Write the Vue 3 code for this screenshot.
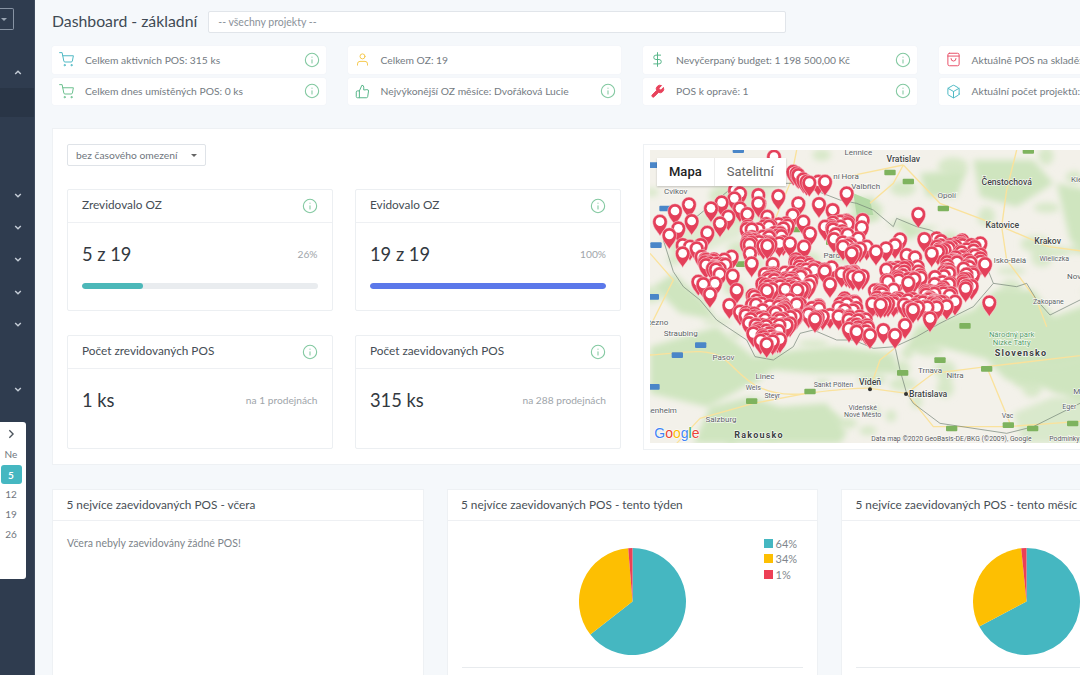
<script setup>
const icons = {
  cart: '<circle cx="9" cy="21" r="1"/><circle cx="20" cy="21" r="1"/><path d="M1 1h4l2.68 13.39a2 2 0 0 0 2 1.61h9.72a2 2 0 0 0 2-1.61L23 6H6"/>',
  user: '<path d="M20 21v-2a4 4 0 0 0-4-4H8a4 4 0 0 0-4 4v2"/><circle cx="12" cy="7" r="4"/>',
  thumb: '<path d="M14 9V5a3 3 0 0 0-3-3l-4 9v11h11.28a2 2 0 0 0 2-1.7l1.38-9a2 2 0 0 0-2-2.3zM7 22H4a2 2 0 0 1-2-2v-7a2 2 0 0 1 2-2h3"/>',
  dollar: '<path d="M12 1v22M17 5H9.5a3.5 3.5 0 0 0 0 7h5a3.5 3.5 0 0 1 0 7H6"/>',
  wrench: '<path fill="currentColor" d="M14.7 6.3a1 1 0 0 0 0 1.4l1.6 1.6a1 1 0 0 0 1.4 0l3.77-3.77a6 6 0 0 1-7.94 7.94l-6.91 6.91a2.12 2.12 0 0 1-3-3l6.91-6.91a6 6 0 0 1 7.94-7.94l-3.76 3.76z"/>',
  bag: '<rect x="3" y="2" width="18" height="20" rx="2.5"/><path d="M3 6.5h18M16 10.5a4 4 0 0 1-8 0"/>',
  box: '<path d="M21 16V8a2 2 0 0 0-1-1.73l-7-4a2 2 0 0 0-2 0l-7 4A2 2 0 0 0 3 8v8a2 2 0 0 0 1 1.73l7 4a2 2 0 0 0 2 0l7-4A2 2 0 0 0 21 16z"/><path d="M3.27 6.96 12 12.01l8.73-5.05M12 22.08V12"/>',
}

const kpis = [
  { icon: 'cart', color: '#4fb9c4', text: 'Celkem aktivních POS: 315 ks', info: true },
  { icon: 'user', color: '#f5c94f', text: 'Celkem OZ: 19', info: false },
  { icon: 'dollar', color: '#58b68a', text: 'Nevyčerpaný budget: 1 198 500,00 Kč', info: true },
  { icon: 'bag', color: '#e9536b', text: 'Aktuálně POS na skladě: 42 ks', info: true },
  { icon: 'cart', color: '#6cc08f', text: 'Celkem dnes umístěných POS: 0 ks', info: true },
  { icon: 'thumb', color: '#58b68a', text: 'Nejvýkonější OZ měsíce: Dvořáková Lucie', info: true },
  { icon: 'wrench', color: '#e8435c', text: 'POS k opravě: 1', info: true },
  { icon: 'box', color: '#4fb9c4', text: 'Aktuální počet projektů: 6', info: true },
]

const sideRows = [
  { cls: 'up' }, { cls: 'active' }, { cls: 'blank' },
  { cls: 'down' }, { cls: 'down' }, { cls: 'down' }, { cls: 'down' }, { cls: 'down' },
  { cls: 'gap' }, { cls: 'down' },
]

const progressCards = [
  { title: 'Zrevidovalo OZ', value: '5 z 19', pct: 26, color: '#4cb8b9' },
  { title: 'Evidovalo OZ', value: '19 z 19', pct: 100, color: '#5b78ea' },
]
const countCards = [
  { title: 'Počet zrevidovaných POS', value: '1 ks', note: 'na 1 prodejnách' },
  { title: 'Počet zaevidovaných POS', value: '315 ks', note: 'na 288 prodejnách' },
]

// pie slices as clockwise angles from the top
function slice(from, to, r = 53.5) {
  const pt = a => {
    const rad = (a - 90) * Math.PI / 180
    return `${(r + r * Math.cos(rad)).toFixed(2)} ${(r + r * Math.sin(rad)).toFixed(2)}`
  }
  return `M${r} ${r}L${pt(from)}A${r} ${r} 0 ${to - from > 180 ? 1 : 0} 1 ${pt(to)}Z`
}
const pieCards = [
  { title: '5 nejvíce zaevidovaných POS - tento týden', cuts: [232, 355.4] },
  { title: '5 nejvíce zaevidovaných POS - tento měsíc', cuts: [242, 354.3] },
]
const pieColors = ['#45b7c1', '#fdbf02', '#ed3f55']
const legend = ['64%', '34%', '1%']

// pin heads in map units (3 units = 1px)
const loose = `402,50 60,245 105,213 147,193 88,285 115,265 155,243 213,205 245,187 202,278 240,250 265,230
 283,175 300,160 355,165 300,205 322,222 358,190 415,168 382,230 460,95 475,105 490,118 508,128 535,125 555,125
 475,190 458,225 490,245 537,192 578,210 620,160 555,260 510,280 600,245 668,240 665,262 835,222 1048,487
 128,315 128,340 150,320 170,325 182,315 185,350 275,350 330,340 335,370 398,372 375,402 278,407 340,300
 492,320 468,358 708,335 738,325 765,315 780,298 800,345 825,352 680,320 655,295 853,297 890,295 875,340
 940,360 1035,372 765,585 730,570 690,585 650,575 380,612 340,580 268,495 300,515 335,520 210,462 225,430
 175,425 190,432 290,450 570,432 575,382 570,525 795,555 870,535 945,485 977,445 470,100 500,125 285,150 355,190`
const clusters = [
  [385, 285, 65, 35, 40], [600, 270, 25, 30, 16], [225, 380, 32, 25, 20], [440, 425, 75, 28, 46],
  [510, 385, 45, 20, 14], [380, 510, 75, 45, 42], [385, 580, 40, 28, 22], [500, 515, 50, 25, 18],
  [635, 410, 35, 18, 12], [620, 500, 30, 30, 14], [655, 550, 35, 25, 16], [735, 470, 40, 25, 22],
  [790, 405, 55, 25, 24], [830, 480, 65, 30, 26], [895, 470, 50, 30, 20], [930, 320, 40, 20, 16],
  [985, 340, 40, 30, 22], [960, 400, 40, 40, 18], [905, 410, 25, 25, 10], [635, 330, 30, 25, 10],
]

let seed = 17
const rnd = () => (seed = (seed * 16807) % 2147483647) / 2147483647
const pins = loose.trim().split(/\s+/).map(p => p.split(',').map(Number))
clusters.forEach(([cx, cy, rx, ry, n]) => {
  for (let i = 0; i < n; i++) {
    pins.push([Math.round(cx + (rnd() * 2 - 1) * rx), Math.round(cy + (rnd() * 2 - 1) * ry)])
  }
})
pins.sort((a, b) => a[1] - b[1])

// mottled woodland texture
const woods = Array.from({ length: 70 }, () => ({
  x: Math.round(30 + rnd() * 1350),
  y: Math.round(30 + rnd() * 880),
  rx: Math.round(14 + rnd() * 34),
  ry: Math.round(8 + rnd() * 22),
}))

const shields = [
  [750, 97, 'g'], [805, 124, 'g'], [910, 205, 'g'], [1165, 32, 'g'], [465, 268, 'g'], [575, 306, 'g'], [305, 372, 'g'],
  [975, 557, 'g'], [900, 660, 'g'], [788, 698, 'g'], [1040, 686, 'g'], [510, 754, 'g'], [335, 783, 'g'],
  [1105, 855, 'g'], [1178, 865, 'g'], [1298, 850, 'g'], [935, 865, 'g'],
  [295, 30, 'b'], [38, 75, 'b'], [75, 205, 'b'], [48, 315, 'b'], [40, 470, 'b'], [182, 615, 'b'], [112, 645, 'b'], [42, 740, 'b'],
]
const labels = [
  ['Lennice', 655, 45, 'sm'], ['Vratislav', 790, 66, 'big'], ['Cvikov', 107, 163, 'sm'], ['Valbřich', 677, 146, 'sm'],
  ['ní Hora', 618, 116, 'sm'], ['Opolí', 920, 173, 'sm'], ['Čenstochová', 1100, 135, 'big'], ['Katovice', 1087, 265, 'big'],
  ['Krakov', 1223, 311, 'big'], ['Wieliczka', 1243, 364, 'xs'], ['lsko-Bělá', 1110, 370, 'sm'], ['Pard', 575, 355, 'sm'],
  ['Nov', 1302, 416, 'sm'], ['Kie', 1310, 126, 'sm'], ['Zakopane', 1225, 491, 'xs'], ['Straubing', 122, 589, 'sm'],
  ['tezno', 55, 556, 'sm'], ['Pasov', 250, 660, 'sm'], ['Linec', 375, 716, 'sm'], ['Wels', 340, 750, 'xs'],
  ['Steyr', 397, 775, 'xs'], ['Sankt Pölten', 580, 741, 'xs'], ['Vídeň', 690, 736, 'big'], ['Trnava', 870, 700, 'sm'],
  ['Nitra', 945, 715, 'sm'], ['Vídeňské', 668, 810, 'xs'], ['Nové Město', 668, 830, 'xs'], ['senheim', 65, 820, 'sm'],
  ['Salzburg', 243, 846, 'sm'], ['Eger', 1288, 808, 'xs'], ['Vac', 1103, 835, 'xs'], ['M', 1310, 763, 'sm'],
]
</script>

<template>
  <div class="page">
    <aside class="sidebar">
      <div class="toggle"><span class="caret"></span></div>
      <div v-for="(row, i) in sideRows" :key="i" class="side-row" :class="row.cls">
        <svg v-if="row.cls === 'up' || row.cls === 'down'" viewBox="0 0 10 6" class="chev">
          <path :d="row.cls === 'up' ? 'M1.5 5 5 1.5 8.500 5' : 'M1.500 1 5 4.500 8.500 1'" />
        </svg>
      </div>
    </aside>

    <div class="calendar">
      <svg viewBox="0 0 8 12" class="cal-next"><path d="M2 1.500 6.500 6 2 10.500" /></svg>
      <span class="cal-cell cal-head">Ne</span>
      <span class="cal-cell cal-today">5</span>
      <span class="cal-cell">12</span>
      <span class="cal-cell">19</span>
      <span class="cal-cell">26</span>
    </div>

    <main class="main">
      <header class="head">
        <h1>Dashboard - základní</h1>
        <div class="project-select">-- všechny projekty --</div>
      </header>

      <section class="kpis">
        <div v-for="k in kpis" :key="k.text" class="kpi">
          <svg class="kpi-icon" viewBox="0 0 24 24" :style="{ color: k.color }" v-html="icons[k.icon]"></svg>
          <span class="kpi-text">{{ k.text }}</span>
          <svg v-if="k.info" class="info" viewBox="0 0 24 24">
            <circle cx="12" cy="12" r="10" /><path d="M12 16.500v-5M12 7.600v.2" />
          </svg>
        </div>
      </section>

      <section class="panel">
        <div class="panel-left">
          <div class="range-select">bez časového omezení <span class="range-caret"></span></div>
          <div class="stat-grid">
            <div v-for="c in progressCards" :key="c.title" class="stat stat-progress">
              <div class="stat-head">
                <span>{{ c.title }}</span>
                <svg class="info" viewBox="0 0 24 24">
                  <circle cx="12" cy="12" r="10" /><path d="M12 16.500v-5M12 7.600v.2" />
                </svg>
              </div>
              <div class="stat-body">
                <div class="stat-line">
                  <span class="stat-value">{{ c.value }}</span>
                  <span class="stat-note">{{ c.pct }}%</span>
                </div>
                <div class="bar">
                  <div class="bar-fill" :style="{ width: c.pct + '%', background: c.color }"></div>
                </div>
              </div>
            </div>
            <div v-for="c in countCards" :key="c.title" class="stat stat-count">
              <div class="stat-head">
                <span>{{ c.title }}</span>
                <svg class="info" viewBox="0 0 24 24">
                  <circle cx="12" cy="12" r="10" /><path d="M12 16.500v-5M12 7.600v.2" />
                </svg>
              </div>
              <div class="stat-body">
                <div class="stat-line">
                  <span class="stat-value">{{ c.value }}</span>
                  <span class="stat-note">{{ c.note }}</span>
                </div>
              </div>
            </div>
          </div>
        </div>

        <div class="map-wrap">
          <div class="map">
            <svg class="map-svg" viewBox="30 30 1350 880" preserveAspectRatio="xMinYMin slice">
              <defs>
                <filter id="soft"><feGaussianBlur stdDeviation="9" /></filter>
                <g id="pin">
                  <path d="M0 43C-6 30-22 19-22 0A22 22 0 1 1 22 0C22 19 6 30 0 43Z" fill="#e4405a" stroke="#fbdfe3" stroke-width="1.500" />
                  <circle r="13" fill="#fff" />
                </g>
              </defs>
              <rect x="30" y="30" width="1350" height="880" fill="#f3f1ea" />
              <g fill="#d7e8c8" filter="url(#soft)">
                <ellipse v-for="(w, i) in woods" :key="i" :cx="w.x" :cy="w.y" :rx="w.rx" :ry="w.ry" />
              </g>
              <g fill="#cfe5bf" filter="url(#soft)">
                <path d="M620 180 700 170 720 240 660 240Z" />
                <path d="M830 560 1000 510 1070 450 1180 450 1240 530 1380 480 1380 650 1250 680 1050 660 900 620 790 640Z" />
                <path d="M1040 660 1250 680 1380 650 1380 800 1200 740 1100 720Z" />
                <path d="M30 620 230 560 340 650 470 630 590 620 760 640 780 700 680 700 520 700 400 690 280 760 200 800 30 760Z" />
                <path d="M210 800 330 770 420 800 560 790 620 880 600 910 160 910Z" />
                <path d="M1000 60 1180 60 1240 130 1130 200 1020 170Z" />
                <path d="M1250 130 1380 160 1380 380 1290 300Z" />
                <path d="M100 400 190 480 230 540 120 520 40 440Z" />
                <path d="M770 230 830 260 900 260 800 300Z" />
                <path d="M840 100 980 90 950 170 860 170Z" />
                <path d="M60 300 300 140 420 130 300 290 130 360Z" opacity=".55" />
                <path d="M1120 820 1240 770 1380 780 1380 910 1150 910Z" opacity=".7" />
              </g>
              <path d="M640 160 690 180 700 225 650 225Z" fill="#b3d9a5" />
              <g fill="none" stroke="#fae29c" stroke-width="4">
                <path d="M30 645C120 640 200 620 250 655S340 780 500 760 690 745 690 745L800 760 880 700 1040 680 1380 640" />
                <path d="M690 745 720 660 770 620 790 500" />
                <path d="M790 75 760 130 690 190M790 75 900 190 1085 260 1225 320 1380 340" />
                <path d="M1085 260 1100 150 1130 30M1085 260 1100 360 1190 480 1220 560" />
                <path d="M180 835 340 790 500 760M180 835 110 910M30 340 100 420 30 560" />
                <path d="M800 760 880 860 1100 860 1380 840M1040 680 1110 850" />
                <path d="M470 30 450 130 380 300M620 110 790 75" />
              </g>
              <g fill="none" stroke="#6f7f73" stroke-width="2" stroke-linejoin="round">
                <path d="M100 395 130 440 180 480 230 540 320 600 345 650 400 660 460 620 480 580 520 570 590 600 640 600 700 625 765 620 830 590 900 550 1000 500 1060 430 1040 380 960 310 870 270 830 260 770 235 760 260 700 210 650 190 600 180 470 130 350 130 280 140 170 230 70 300Z" />
                <path d="M1060 430 1130 440 1160 430 1190 480 1230 525 1320 480 1380 480M765 620 780 690 800 760 820 790 900 850 1100 880 1180 860 1380 760" />
              </g>
              <g v-for="s in shields" :key="s[0] + '-' + s[1]">
                <rect :x="s[0] - 17" :y="s[1] - 8" width="34" height="17" rx="3" :fill="s[2] === 'g' ? '#7eb35e' : '#4a86c8'" />
              </g>
              <text v-for="l in labels" :key="l[0]" :x="l[1]" :y="l[2]" class="map-label" :class="l[3]" text-anchor="middle">{{ l[0] }}</text>
              <text x="1115" y="590" text-anchor="middle" class="map-label park">Národný park</text>
              <text x="1115" y="614" text-anchor="middle" class="map-label park">Nízke Tatry</text>
              <text x="1143" y="647" text-anchor="middle" class="map-label country">Slovensko</text>
              <text x="357" y="894" text-anchor="middle" class="map-label country">Rakousko</text>
              <circle cx="690" cy="748" r="6" fill="#333" />
              <circle cx="798" cy="762" r="6" fill="#333" />
              <text x="807" y="770" class="map-label big">Bratislava</text>
              <use v-for="(p, i) in pins" :key="i" href="#pin" :x="p[0]" :y="p[1]" />
              <text x="43" y="894" class="google">
                <tspan fill="#4285f4">G</tspan><tspan fill="#ea4335">o</tspan><tspan fill="#fbbc05">o</tspan><tspan fill="#4285f4">g</tspan><tspan fill="#34a853">l</tspan><tspan fill="#ea4335">e</tspan>
              </text>
              <text x="694" y="902" class="attrib">Data map ©2020 GeoBasis-DE/BKG (©2009), Google</text>
              <text x="1228" y="902" class="attrib">Podmínky použití</text>
            </svg>
            <div class="map-type">
              <span class="map-type-on">Mapa</span>
              <span class="map-type-off">Satelitní</span>
            </div>
          </div>
        </div>
      </section>

      <section class="charts">
        <div class="chart-card">
          <div class="chart-head">5 nejvíce zaevidovaných POS - včera</div>
          <div class="chart-body">
            <p class="empty">Včera nebyly zaevidovány žádné POS!</p>
          </div>
        </div>
        <div v-for="c in pieCards" :key="c.title" class="chart-card">
          <div class="chart-head">{{ c.title }}</div>
          <div class="chart-body chart-pie">
            <svg class="pie" viewBox="0 0 107 107">
              <path :d="slice(0, c.cuts[0])" :fill="pieColors[0]" />
              <path :d="slice(c.cuts[0], c.cuts[1])" :fill="pieColors[1]" />
              <path :d="slice(c.cuts[1], 360)" :fill="pieColors[2]" />
            </svg>
            <ul class="legend">
              <li v-for="(l, i) in legend" :key="l"><i :style="{ background: pieColors[i] }"></i>{{ l }}</li>
            </ul>
            <div class="chart-rule"></div>
          </div>
        </div>
      </section>
    </main>
  </div>
</template>

<style scoped>
.page {
  position: relative;
  display: flex;
  width: 1080px;
  height: 675px;
  overflow: hidden;
  background: #f5f8fb;
  font-family: Lato, "Noto Sans", sans-serif;
  color: #6d747b;
}
.sidebar {
  flex: none;
  width: 34px;
  padding-top: 8px;
  background: #2f3c4f;
  border-right: 1px solid #3f4c5e;
}
.toggle {
  display: flex;
  align-items: center;
  width: 14px;
  height: 22px;
  border: 1px solid #8793a3;
  border-left: 0;
  border-radius: 0 2px 2px 0;
  padding-left: 1px;
  box-sizing: border-box;
}
.caret {
  border: 3px solid transparent;
  border-top-color: #9aa5b3;
  border-bottom: 0;
}
.side-row {
  display: flex;
  align-items: center;
  justify-content: center;
  height: 32.400px;
  padding-left: 2px;
}
.side-row.up {
  margin-top: 26px;
}
.side-row.active {
  height: 29px;
  background: #293546;
}
.side-row.blank {
  height: 61.500px;
}
.chev {
  width: 8px;
  height: 5px;
  fill: none;
  stroke: #c4ccd6;
  stroke-width: 1.800;
}
.calendar {
  position: absolute;
  left: 0;
  top: 422px;
  display: flex;
  flex-direction: column;
  align-items: center;
  width: 26px;
  height: 157px;
  box-sizing: border-box;
  padding-top: 7px;
  background: #fff;
  border-radius: 0 3px 3px 0;
  font-size: 10px;
  color: #6f767d;
}
.cal-next {
  width: 8px;
  height: 10px;
  margin-left: -4px;
  margin-bottom: 5px;
  fill: none;
  stroke: #4c545c;
  stroke-width: 1.600;
}
.cal-cell {
  width: 21px;
  height: 20.200px;
  margin-left: -4px;
  line-height: 20px;
  text-align: center;
}
.cal-head {
  height: 21px;
}
.cal-today {
  height: 19px;
  background: #45b7c1;
  border-radius: 3px;
  color: #fff;
  font-weight: 700;
}
.main {
  flex: none;
  width: 1100px;
  padding: 11px 0 0 17px;
}
.head {
  display: flex;
  align-items: center;
  gap: 11px;
  height: 22px;
}
.head h1 {
  margin: -3px 0 0;
  font-size: 15.800px;
  font-weight: 400;
  color: #3f4a54;
  white-space: nowrap;
}
.project-select {
  width: 578px;
  height: 22px;
  box-sizing: border-box;
  padding-left: 9px;
  line-height: 21px;
  font-size: 10.500px;
  color: #8a9199;
  background: #fff;
  border: 1px solid #e1e5ea;
  border-radius: 2px;
}
.kpis {
  display: grid;
  grid-template-columns: repeat(4, 273.500px);
  column-gap: 22px;
  row-gap: 4px;
  margin-top: 13px;
}
.kpi {
  display: flex;
  align-items: center;
  height: 27.500px;
  padding: 0 5.500px 0 7px;
  background: #fff;
  border-radius: 2px;
  box-shadow: 0 0 1px #e6e9ed;
  white-space: nowrap;
  overflow: hidden;
}
.kpi-icon {
  flex: none;
  width: 15px;
  height: 15px;
  margin-right: 11px;
  fill: none;
  stroke: currentColor;
  stroke-width: 1.600;
  stroke-linecap: round;
  stroke-linejoin: round;
}
.kpi-text {
  flex: 1;
  font-size: 10.300px;
  color: #747b82;
}
.info {
  flex: none;
  width: 16px;
  height: 16px;
  fill: none;
  stroke: #82c8a0;
  stroke-width: 1.600;
  stroke-linecap: round;
}
.panel {
  display: flex;
  gap: 22px;
  width: 1100px;
  height: 337px;
  box-sizing: border-box;
  margin-top: 23px;
  padding: 15px 0 0 14px;
  background: #fff;
  border: 1px solid #eef1f4;
}
.panel-left {
  flex: none;
  width: 554px;
}
.range-select {
  display: flex;
  align-items: center;
  justify-content: space-between;
  width: 139px;
  height: 22px;
  box-sizing: border-box;
  padding: 0 8px;
  font-size: 10.300px;
  color: #6f767d;
  border: 1px solid #dfe3e8;
  border-radius: 2px;
}
.range-caret {
  border: 3px solid transparent;
  border-top-color: #666;
  border-bottom: 0;
}
.stat-grid {
  display: grid;
  grid-template-columns: 265.500px 266px;
  grid-template-rows: 122px 114px;
  gap: 24px 22.500px;
  margin-top: 23px;
}
.stat {
  box-sizing: border-box;
  background: #fff;
  border: 1px solid #eceff2;
  border-radius: 2px;
}
.stat-head {
  display: flex;
  align-items: center;
  justify-content: space-between;
  height: 33px;
  box-sizing: border-box;
  padding: 0 14px;
  font-size: 11.800px;
  color: #454d55;
  border-bottom: 1px solid #eef0f3;
}
.stat-head span {
  margin-top: -3px;
}
.stat-body {
  padding: 0 14px;
}
.stat-line {
  display: flex;
  align-items: center;
  justify-content: space-between;
  height: 60px;
  box-sizing: border-box;
  padding-top: 2px;
}
.stat-count .stat-line {
  height: 62px;
  padding-top: 0;
}
.stat-value {
  font-size: 18.300px;
  color: #33393f;
}
.stat-note {
  font-size: 10.200px;
  color: #a0a5aa;
}
.bar {
  height: 6px;
  background: #e9ecef;
  border-radius: 3px;
  overflow: hidden;
}
.bar-fill {
  height: 100%;
  border-radius: 3px;
}
.map-wrap {
  flex: none;
  width: 460px;
  height: 306px;
  box-sizing: border-box;
  padding: 5px 0 0 6px;
  border: 1px solid #eef1f4;
}
.map {
  position: relative;
  width: 450px;
  height: 293px;
  overflow: hidden;
}
.map-svg {
  display: block;
  width: 450px;
  height: 293.333px;
}
.map-label {
  font-family: Roboto, sans-serif;
  font-size: 24px;
  fill: #59605f;
  stroke: #fff;
  stroke-width: 3px;
  paint-order: stroke;
}
.map-label.xs {
  font-size: 21px;
}
.map-label.sm {
  font-size: 24px;
}
.map-label.big {
  font-size: 26px;
  font-weight: 500;
  fill: #3e4543;
}
.map-label.park {
  font-size: 23px;
  fill: #4f9a62;
}
.map-label.country {
  font-size: 27px;
  font-weight: 700;
  letter-spacing: 3.500px;
  fill: #3b413f;
}
.google {
  font-family: "Liberation Sans", sans-serif;
  font-size: 42px;
  stroke: #fff;
  stroke-width: 3px;
  paint-order: stroke;
}
.attrib {
  font-family: Roboto, sans-serif;
  font-size: 20.500px;
  fill: #555;
  stroke: #fff;
  stroke-width: 3px;
  paint-order: stroke;
}
.map-type {
  position: absolute;
  left: 7px;
  top: 8px;
  display: flex;
  height: 28px;
  background: #fff;
  font-family: Roboto, sans-serif;
  font-size: 13px;
  line-height: 28px;
  box-shadow: 0 1px 2px rgba(0, 0, 0, .2);
}
.map-type span {
  padding: 0 12px;
}
.map-type-on {
  font-weight: 500;
  color: #222;
  border-right: 1px solid #ececec;
}
.map-type-off {
  color: #666;
}
.charts {
  display: grid;
  grid-template-columns: repeat(3, 371.500px);
  column-gap: 23px;
  margin-top: 24px;
}
.chart-card {
  height: 230px;
  box-sizing: border-box;
  background: #fff;
  border: 1px solid #eef1f4;
}
.chart-head {
  height: 31px;
  box-sizing: border-box;
  padding: 0 13.500px;
  font-size: 11.800px;
  line-height: 29px;
  color: #484f56;
  border-bottom: 1px solid #eef0f3;
}
.chart-body {
  position: relative;
  padding: 0 14px;
}
.empty {
  margin: 0;
  padding-top: 16px;
  font-size: 10.500px;
  color: #7d848a;
}
.chart-pie {
  display: flex;
  flex-direction: column;
  align-items: center;
  padding-top: 27px;
}
.pie {
  display: block;
  width: 107px;
  height: 107px;
}
.chart-rule {
  align-self: stretch;
  height: 1px;
  margin-top: 12px;
  background: #e8ebee;
}
.legend {
  position: absolute;
  left: 316px;
  top: 15px;
  margin: 0;
  padding: 0;
  list-style: none;
  font-size: 11px;
  line-height: 15.300px;
  color: #80868c;
}
.legend li {
  display: flex;
  align-items: center;
  gap: 3px;
}
.legend i {
  width: 9px;
  height: 9px;
}
</style>

<style>
body {
  background: #f5f8fb;
  overflow: hidden;
}
</style>
